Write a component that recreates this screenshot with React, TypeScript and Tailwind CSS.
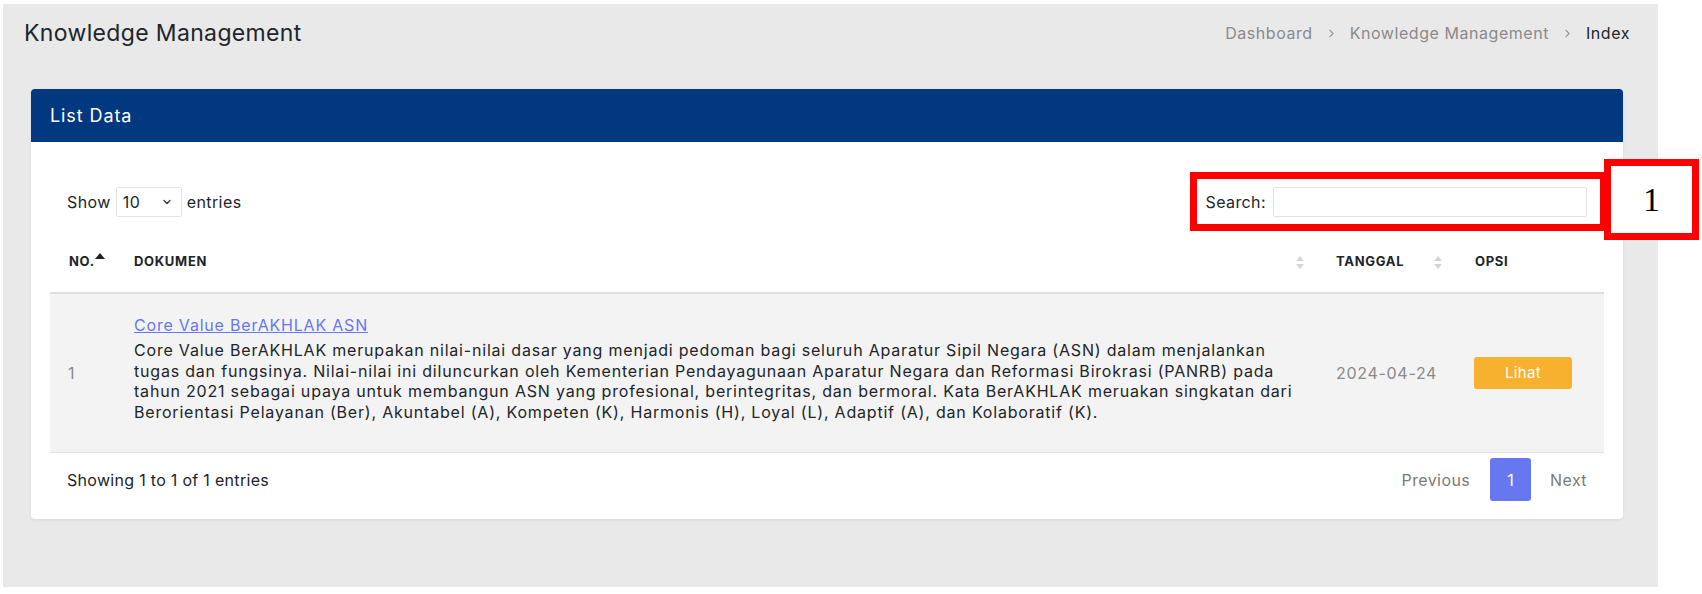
import { ChevronDown, ChevronRight } from "lucide-react";

function SortBoth() {
  return (
    <svg width="10" height="15" viewBox="0 0 10 15" className="shrink-0">
      <path d="M5 1 L9 6 L1 6 Z" fill="#d5d5d5" />
      <path d="M5 14 L9 9 L1 9 Z" fill="#d5d5d5" />
    </svg>
  );
}

const description =
  "Core Value BerAKHLAK merupakan nilai-nilai dasar yang menjadi pedoman bagi seluruh Aparatur Sipil Negara (ASN) dalam menjalankan tugas dan fungsinya. Nilai-nilai ini diluncurkan oleh Kementerian Pendayagunaan Aparatur Negara dan Reformasi Birokrasi (PANRB) pada tahun 2021 sebagai upaya untuk membangun ASN yang profesional, berintegritas, dan bermoral. Kata BerAKHLAK meruakan singkatan dari Berorientasi Pelayanan (Ber), Akuntabel (A), Kompeten (K), Harmonis (H), Loyal (L), Adaptif (A), dan Kolaboratif (K).";

export default function App() {
  return (
    <div className="relative w-[1702px] h-[594px] bg-white pt-[4px] pl-[3px] font-['Inter',sans-serif] text-[#212529]">
      <div className="w-[1655px] h-[583px] bg-[#e9e9e9]">
        {/* page heading */}
        <div className="flex h-[58px] items-center justify-between pl-[21px] pr-[28px]">
          <h1 className="text-[23px] font-normal tracking-[0.35px] text-[#212529]">Knowledge Management</h1>
          <div className="flex items-center gap-[12px] text-[16px] tracking-[0.55px] text-[#8a8a8a]">
            <span>Dashboard</span>
            <ChevronRight className="h-[13px] w-[13px] text-[#9a9a9a]" strokeWidth={2} />
            <span>Knowledge Management</span>
            <ChevronRight className="h-[13px] w-[13px] text-[#9a9a9a]" strokeWidth={2} />
            <span className="text-[#212529]">Index</span>
          </div>
        </div>

        {/* card */}
        <div className="ml-[28px] mt-[27px] w-[1592px] rounded-[4px] bg-white shadow-[0_1px_3px_rgba(0,0,0,0.08)]">
          <div className="flex h-[53px] items-center rounded-t-[4px] bg-[#02387f] px-[19px] text-[18px] tracking-[0.9px] text-white">
            List Data
          </div>

          <div className="px-[19px] pt-[45px] pb-[18px]">
            {/* controls */}
            <div className="flex h-[30px] items-center justify-between px-[17px] text-[16px] tracking-[0.4px]">
              <div className="flex items-center gap-[5px]">
                <span>Show</span>
                <div className="relative">
                  <select className="h-[30px] w-[66px] appearance-none rounded-[2px] border border-[#e3e3e3] bg-white pl-[6px] text-[16px] text-[#212529] outline-none">
                    <option>10</option>
                    <option>25</option>
                    <option>50</option>
                    <option>100</option>
                  </select>
                  <ChevronDown className="pointer-events-none absolute right-[9px] top-[9px] h-[12px] w-[12px] text-[#333]" strokeWidth={2.5} />
                </div>
                <span>entries</span>
              </div>
              <div className="flex items-center gap-[7px]">
                <span>Search:</span>
                <input className="h-[30px] w-[314px] rounded-[2px] border border-[#e3e3e3] bg-white px-2 outline-none" />
              </div>
            </div>

            {/* table head */}
            <div className="mt-[15px] grid h-[62px] grid-cols-[66px_1202px_139px_146px] items-center border-b-2 border-[#dedede] text-[13px] font-bold uppercase tracking-[0.7px] text-[#212529]">
              <div className="flex items-start pl-[19px]">
                <span>No.</span>
                <svg width="10" height="7" viewBox="0 0 10 7" className="mt-[1px]">
                  <path d="M5 0 L10 6 L0 6 Z" fill="#222" />
                </svg>
              </div>
              <div className="flex items-center justify-between pl-[18px] pr-[13px]">
                <span>Dokumen</span>
                <SortBoth />
              </div>
              <div className="flex items-center justify-between pl-[18px] pr-[14px]">
                <span>Tanggal</span>
                <SortBoth />
              </div>
              <div className="pl-[18px]">Opsi</div>
            </div>

            {/* table row */}
            <div className="grid grid-cols-[66px_1202px_139px_146px] items-center border-b border-[#e2e2e2] bg-[#f3f3f3] text-[16px] tracking-[0.8px]">
              <div className="pl-[18px] text-[#8a8a8a]">1</div>
              <div className="pl-[18px] pr-[4px] pt-[21px] pb-[30px]">
                <a href="#" className="mb-[4px] block leading-[21px] text-[#6777ef] underline">
                  Core Value BerAKHLAK ASN
                </a>
                <p className="leading-[20.5px] text-[#212529]">{description}</p>
              </div>
              <div className="pl-[18px] tracking-[0.7px] text-[#8a8a8a]">2024-04-24</div>
              <div className="pl-[17px]">
                <button className="h-[32px] w-[98px] rounded-[3px] bg-[#f8b12f] text-[15px] tracking-[0.3px] text-white">Lihat</button>
              </div>
            </div>

            {/* footer */}
            <div className="flex items-center justify-between pt-[5px] pl-[17px] pr-[17px] text-[16px] tracking-[0.3px]">
              <span>Showing 1 to 1 of 1 entries</span>
              <div className="flex items-center tracking-[0.4px] text-[#7a7a7a]">
                <span className="pr-[20px]">Previous</span>
                <span className="flex h-[43px] w-[41px] items-center justify-center rounded-[3px] bg-[#6777ef] text-white">1</span>
                <span className="pl-[19px]">Next</span>
              </div>
            </div>
          </div>
        </div>
      </div>

      {/* annotation overlay */}
      <div className="pointer-events-none absolute left-[1190px] top-[172px] h-[59px] w-[417px] border-[7px] border-[#ff0000]" />
      <div className="pointer-events-none absolute left-[1604px] top-[159px] flex h-[81px] w-[95px] items-center justify-center border-[7px] border-[#ff0000] bg-white font-['Liberation_Serif',serif] text-[34px] text-black">
        1
      </div>
    </div>
  );
}
